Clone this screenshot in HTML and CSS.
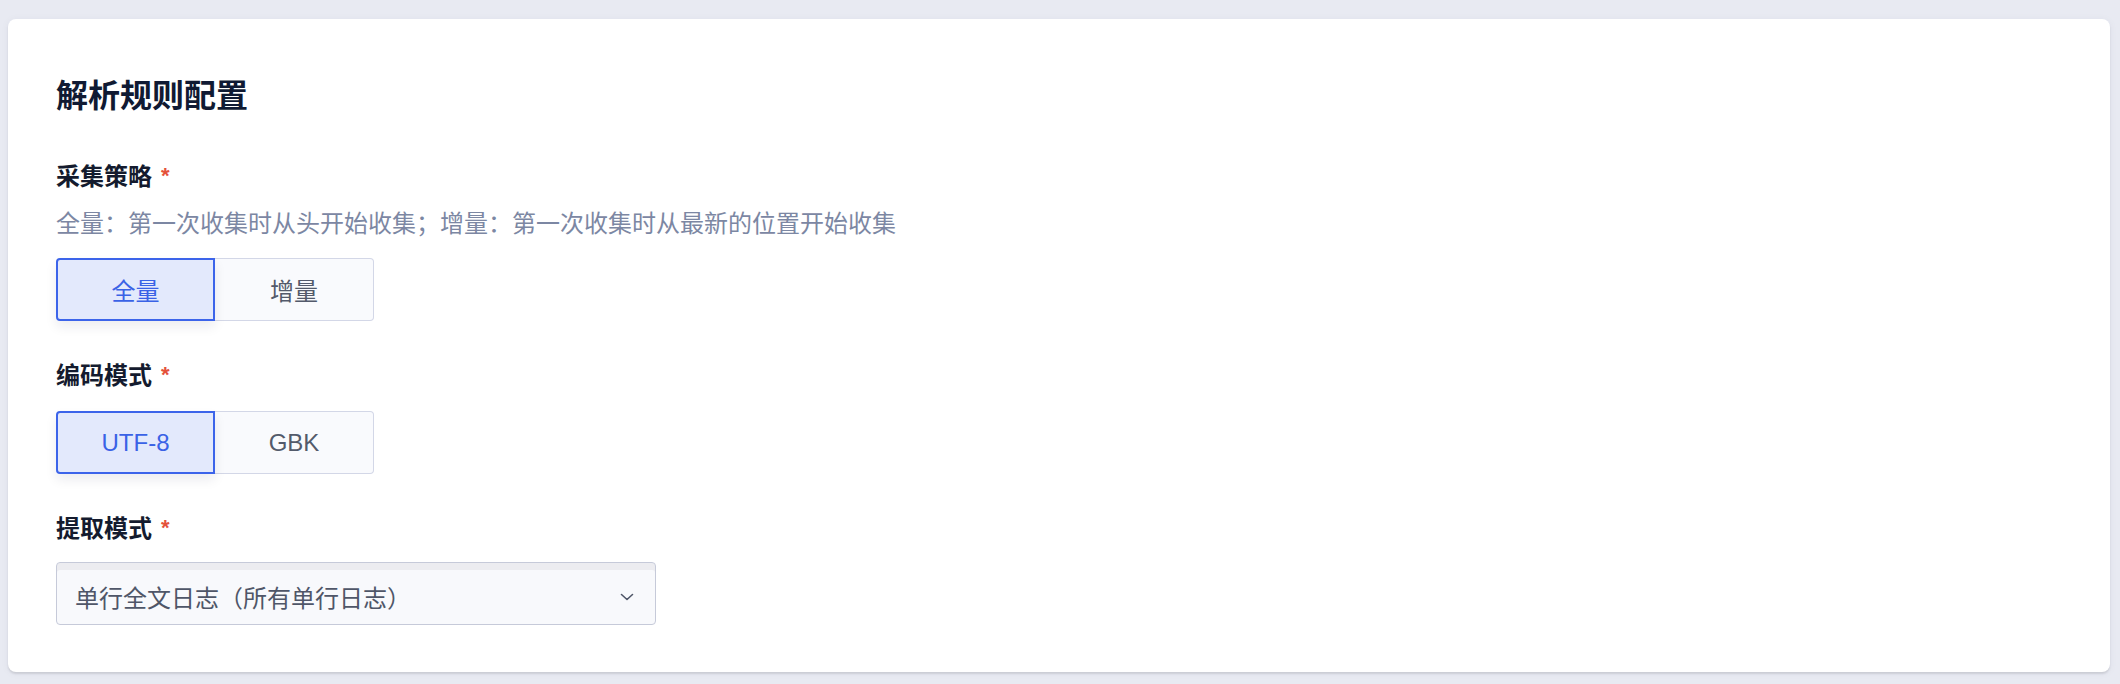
FILE: index.html
```html
<!DOCTYPE html>
<html lang="zh-CN">
<head>
<meta charset="utf-8">
<title>解析规则配置</title>
<link rel="stylesheet" href="styles.css">
</head>
<body>
<section class="card">
  <h1 class="title">解析规则配置</h1>

  <div class="field">
    <div class="label">采集策略<span class="req">*</span></div>
    <div class="help">全量：第一次收集时从头开始收集；增量：第一次收集时从最新的位置开始收集</div>
    <div class="seg">
      <button class="seg-btn active">全量</button>
      <button class="seg-btn">增量</button>
    </div>
  </div>

  <div class="field field-2">
    <div class="label">编码模式<span class="req">*</span></div>
    <div class="seg">
      <button class="seg-btn active">UTF-8</button>
      <button class="seg-btn">GBK</button>
    </div>
  </div>

  <div class="field field-3">
    <div class="label">提取模式<span class="req">*</span></div>
    <div class="select">
      <span class="select-text">单行全文日志（所有单行日志）</span>
      <svg class="chev" width="14" height="8" viewBox="0 0 14 8" aria-hidden="true">
        <path d="M1.5 1.5 L7 6.5 L12.5 1.5" fill="none" stroke="#4f5668" stroke-width="1.6" stroke-linecap="round" stroke-linejoin="round"/>
      </svg>
    </div>
  </div>
</section>
</body>
</html>
```

FILE: styles.css
```css
* { box-sizing: border-box; }

html, body { height: 100%; }

body {
  margin: 0;
  padding: 19px 10px 12px 8px;
  background: #e8eaf2;
  font-family: "Noto Sans CJK SC", "Liberation Sans", sans-serif;
}

.card {
  background: #ffffff;
  border-radius: 8px;
  height: 653px;
  padding: 52px 48px 0 48px;
  display: flex;
  flex-direction: column;
  box-shadow: 0 2px 2px rgba(0, 0, 0, 0.10), 0 1px 8px rgba(30, 40, 80, 0.05);
}

.title {
  margin: 0;
  font-size: 32px;
  line-height: 44px;
  font-weight: 700;
  color: #101a33;
}

.field {
  display: flex;
  flex-direction: column;
  align-items: flex-start;
  margin-top: 44px;
}

.field-2 { margin-top: 37px; }
.field-3 { margin-top: 37px; }

.label {
  font-size: 24px;
  line-height: 32px;
  font-weight: 700;
  color: #141b2e;
  display: flex;
  align-items: flex-start;
}

.req {
  font-family: "Liberation Sans", sans-serif;
  font-size: 22px;
  line-height: 26px;
  margin-left: 9px;
  margin-top: 4px;
  color: #e4513b;
  font-weight: 700;
}

.help {
  margin-top: 15px;
  font-size: 24px;
  line-height: 32px;
  color: #7c87a3;
}

.seg {
  display: flex;
  margin-top: 20px;
}

.field-2 .seg { margin-top: 21px; }

.seg-btn {
  width: 159px;
  height: 63px;
  margin: 0;
  padding: 0;
  display: flex;
  align-items: center;
  justify-content: center;
  font-family: "Liberation Sans", "Noto Sans CJK SC", sans-serif;
  font-size: 24px;
  color: #535a6b;
  background: #f9fafd;
  border: 1px solid #d3d7e7;
  border-left: none;
  border-radius: 0 4px 4px 0;
}

.seg-btn.active {
  color: #3a62e6;
  background: #e3e9fc;
  border: 2px solid #3c64ea;
  border-radius: 4px 0 0 4px;
  box-shadow: 0 6px 12px rgba(20, 30, 60, 0.08);
  position: relative;
  z-index: 1;
}

.select {
  margin-top: 19px;
  width: 600px;
  height: 63px;
  display: flex;
  align-items: center;
  justify-content: space-between;
  padding: 0 21px 0 18px;
  background: #f8f9fc;
  border: 1px solid #c6cad9;
  border-radius: 4px;
  box-shadow: inset 0 7px 0 #ececf0;
}

.select-text {
  font-size: 24px;
  color: #4f5668;
  padding-top: 6px;
}

.chev { display: block; margin-top: 6px; }
```
